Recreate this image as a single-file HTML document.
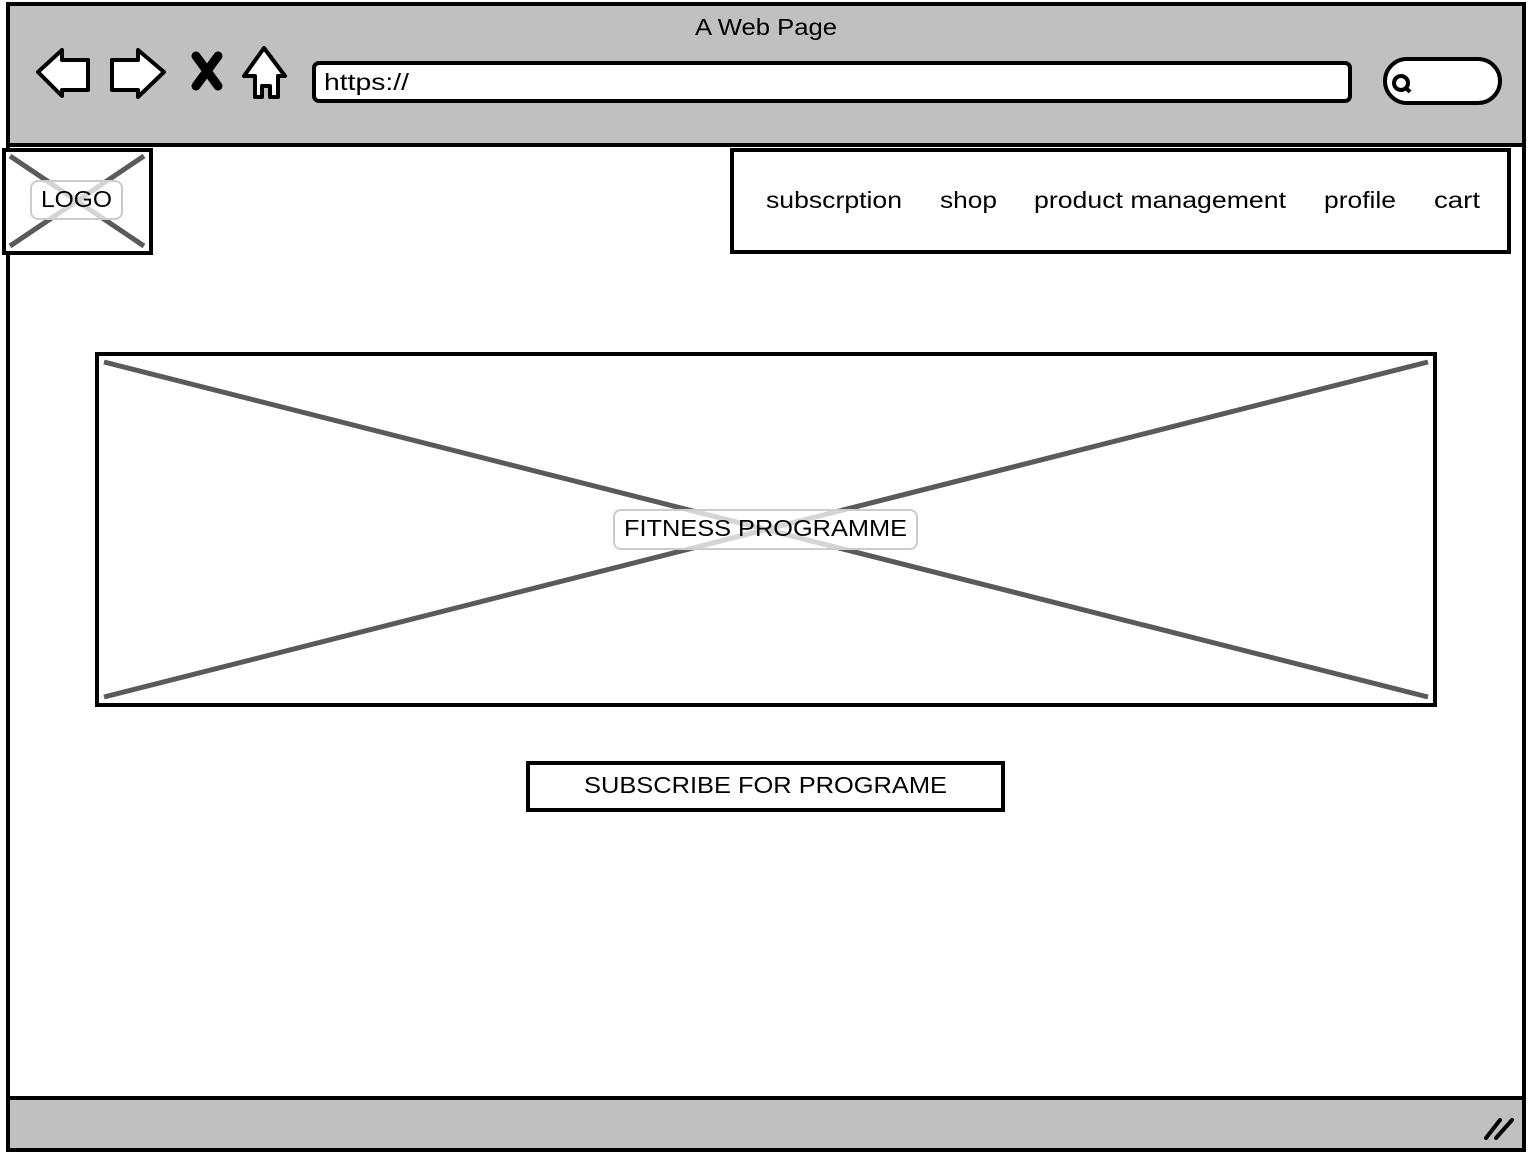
<!DOCTYPE html>
<html><head><style>
html,body{margin:0;padding:0;background:#fff;width:1528px;height:1154px;overflow:hidden}
svg{display:block}
text{font-family:"Liberation Sans",sans-serif;fill:#000}
</style></head><body>
<svg width="1528" height="1154" viewBox="0 0 1528 1154">
<rect x="8" y="4" width="1516" height="1146" fill="#fff" stroke="#000" stroke-width="4"/>
<rect x="8" y="4" width="1516" height="141" fill="#c0c0c0" stroke="#000" stroke-width="4"/>
<rect x="8" y="1098" width="1516" height="52" fill="#c0c0c0" stroke="#000" stroke-width="4"/>
<text x="695" y="35" font-size="23" textLength="142" lengthAdjust="spacingAndGlyphs">A Web Page</text>
<path d="M38 72 L62 50 L62 60 L88 60 L88 90 L62 90 L62 96 Z" fill="#fff" stroke="#000" stroke-width="4" stroke-linejoin="round"/>
<path d="M164 72 L138 50 L138 60 L112 60 L112 90 L138 90 L138 97 Z" fill="#fff" stroke="#000" stroke-width="4" stroke-linejoin="round"/>
<path d="M196 56 L218 86 M218 56 L196 86" stroke="#000" stroke-width="9" stroke-linecap="round"/>
<path d="M264 48 L285 76 L278 76 L278 97 L270 97 L270 86 L262 86 L262 97 L255 97 L255 76 L244 76 Z" fill="#fff" stroke="#000" stroke-width="4" stroke-linejoin="round"/>
<rect x="314" y="63" width="1036" height="38" rx="5" fill="#fff" stroke="#000" stroke-width="4"/>
<text x="324" y="90" font-size="23" textLength="85" lengthAdjust="spacingAndGlyphs">https://</text>
<rect x="1385" y="59" width="115" height="44" rx="22" fill="#fff" stroke="#000" stroke-width="4"/>
<circle cx="1401" cy="83" r="7" fill="none" stroke="#000" stroke-width="4"/>
<path d="M1405 87 L1410 92" stroke="#000" stroke-width="4"/>
<path d="M1486 1138 L1500 1120 M1496 1138 L1512 1120" stroke="#000" stroke-width="4" stroke-linecap="round"/>
<rect x="4" y="150" width="147" height="103" fill="#fff" stroke="#000" stroke-width="4"/>
<path d="M10 156 L144 246 M144 156 L10 246" stroke="#5a5a5a" stroke-width="5"/>
<rect x="31" y="181" width="91" height="38" rx="7" fill="#fff" fill-opacity="0.75" stroke="#ccc" stroke-width="2"/>
<text x="41" y="207" font-size="23" textLength="71" lengthAdjust="spacingAndGlyphs">LOGO</text>
<rect x="732" y="150" width="777" height="102" fill="#fff" stroke="#000" stroke-width="4"/>
<text x="766" y="208" font-size="23" textLength="136" lengthAdjust="spacingAndGlyphs">subscrption</text>
<text x="940" y="208" font-size="23" textLength="57" lengthAdjust="spacingAndGlyphs">shop</text>
<text x="1034" y="208" font-size="23" textLength="252" lengthAdjust="spacingAndGlyphs">product management</text>
<text x="1324" y="208" font-size="23" textLength="72" lengthAdjust="spacingAndGlyphs">profile</text>
<text x="1434" y="208" font-size="23" textLength="46" lengthAdjust="spacingAndGlyphs">cart</text>
<rect x="97" y="354" width="1338" height="351" fill="#fff" stroke="#000" stroke-width="4"/>
<path d="M104 362 L1428 697 M1428 362 L104 697" stroke="#5a5a5a" stroke-width="5"/>
<rect x="614" y="510" width="303" height="39" rx="7" fill="#fff" fill-opacity="0.75" stroke="#ccc" stroke-width="2"/>
<text x="624" y="536" font-size="23" textLength="283" lengthAdjust="spacingAndGlyphs">FITNESS PROGRAMME</text>
<rect x="528" y="763" width="475" height="47" fill="#fff" stroke="#000" stroke-width="4"/>
<text x="584" y="793" font-size="23" textLength="363" lengthAdjust="spacingAndGlyphs">SUBSCRIBE FOR PROGRAME</text>
</svg>
</body></html>
